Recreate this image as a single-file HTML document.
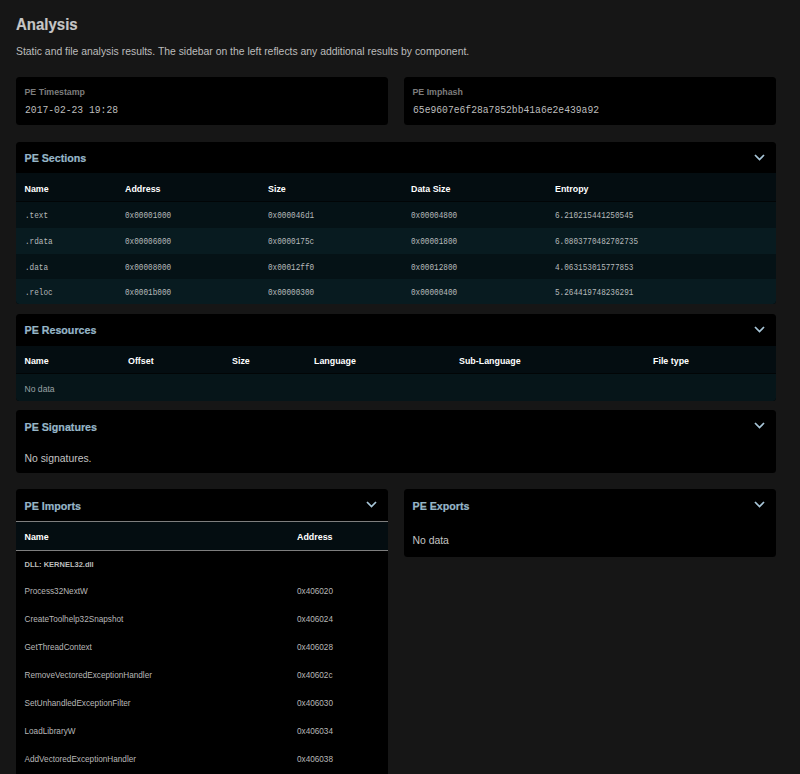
<!DOCTYPE html>
<html><head><meta charset="utf-8">
<style>
*{box-sizing:border-box;margin:0;padding:0}
html,body{width:800px;height:774px;overflow:hidden;background:#161616;font-family:"Liberation Sans",sans-serif;color:#ddd}
.abs{position:absolute}
h1{position:absolute;left:16px;top:13px;font-size:15px;font-weight:bold;color:#c6c6c6;line-height:20px;transform:scaleY(1.1);transform-origin:0 4.5px;margin-top:0.5px;-webkit-text-stroke:0.15px #c6c6c6}
.sub{position:absolute;left:16px;top:45px;font-size:10.4px;color:#bcbcbc;line-height:14px}
.card{position:absolute;background:#000;border-radius:3.5px;overflow:hidden}
.lbl{position:absolute;left:8.5px;font-size:8.8px;font-weight:bold;color:#7c7c7c;line-height:12px}
.val{position:absolute;left:9px;font-family:"Liberation Mono",monospace;font-size:9.7px;color:#bdbdbd;line-height:12px;transform:scaleY(1.15);transform-origin:0 100%}
.title{position:absolute;left:8.5px;font-size:10.7px;transform:scaleY(1.1);transform-origin:0 10.5px;font-weight:bold;color:#96b6c8;line-height:14px;-webkit-text-stroke:0.2px #96b6c8}
.chev{position:absolute;width:11px;height:7px}
.thead{position:absolute;left:0;right:0;background:#040d11}
.th{position:absolute;font-size:8.9px;font-weight:bold;color:#fff;line-height:12px}
.row{position:absolute;left:0;right:0}
.odd{background:#051216}
.even{background:#081b20}
.td{position:absolute;font-family:"Liberation Mono",monospace;font-size:7.7px;color:#b6babb;line-height:10px;margin-top:1px;transform:scaleY(1.15);transform-origin:0 8px}
.ti{position:absolute;font-size:8.2px;color:#b8b8b8;line-height:12px}
</style></head><body>
<h1>Analysis</h1>
<div class="sub">Static and file analysis results. The sidebar on the left reflects any additional results by component.</div>

<div class="card" style="left:16px;top:77px;width:372px;height:48px">
  <div class="lbl" style="top:9px">PE Timestamp</div>
  <div class="val" style="top:29px">2017-02-23 19:28</div>
</div>
<div class="card" style="left:404px;top:77px;width:372px;height:48px">
  <div class="lbl" style="top:9px">PE Imphash</div>
  <div class="val" style="top:29px">65e9607e6f28a7852bb41a6e2e439a92</div>
</div>

<!-- PE Sections -->
<div class="card" style="left:16px;top:142px;width:760px;height:162px">
  <div class="title" style="top:9px">PE Sections</div>
  <svg class="chev" style="left:738px;top:12px" viewBox="0 0 11 7"><path d="M1 1 L5.5 5.5 L10 1" fill="none" stroke="#a8c6d8" stroke-width="1.75"/></svg>
  <div class="thead" style="top:31px;height:29px;border-bottom:1px solid #020506">
    <div class="th" style="left:8.5px;top:9.5px">Name</div>
    <div class="th" style="left:109px;top:9.5px">Address</div>
    <div class="th" style="left:252px;top:9.5px">Size</div>
    <div class="th" style="left:395px;top:9.5px">Data Size</div>
    <div class="th" style="left:539px;top:9.5px">Entropy</div>
  </div>
  <div class="row odd" style="top:60px;height:26px">
    <div class="td" style="left:9px;top:8px">.text</div><div class="td" style="left:109px;top:8px">0x00001000</div><div class="td" style="left:252px;top:8px">0x000046d1</div><div class="td" style="left:395px;top:8px">0x00004800</div><div class="td" style="left:539px;top:8px">6.210215441250545</div>
  </div>
  <div class="row even" style="top:86px;height:25.5px">
    <div class="td" style="left:9px;top:8px">.rdata</div><div class="td" style="left:109px;top:8px">0x00006000</div><div class="td" style="left:252px;top:8px">0x0000175c</div><div class="td" style="left:395px;top:8px">0x00001800</div><div class="td" style="left:539px;top:8px">6.0803770482702735</div>
  </div>
  <div class="row odd" style="top:111.5px;height:25.5px">
    <div class="td" style="left:9px;top:8px">.data</div><div class="td" style="left:109px;top:8px">0x00008000</div><div class="td" style="left:252px;top:8px">0x00012ff0</div><div class="td" style="left:395px;top:8px">0x00012800</div><div class="td" style="left:539px;top:8px">4.063153015777853</div>
  </div>
  <div class="row even" style="top:137px;height:25.5px">
    <div class="td" style="left:9px;top:8px">.reloc</div><div class="td" style="left:109px;top:8px">0x0001b000</div><div class="td" style="left:252px;top:8px">0x00000300</div><div class="td" style="left:395px;top:8px">0x00000400</div><div class="td" style="left:539px;top:8px">5.264419748236291</div>
  </div>
</div>

<!-- PE Resources -->
<div class="card" style="left:16px;top:314px;width:760px;height:87px">
  <div class="title" style="top:9px">PE Resources</div>
  <svg class="chev" style="left:738px;top:12px" viewBox="0 0 11 7"><path d="M1 1 L5.5 5.5 L10 1" fill="none" stroke="#a8c6d8" stroke-width="1.75"/></svg>
  <div class="thead" style="top:31.5px;height:28px;border-bottom:1px solid #020506">
    <div class="th" style="left:8.5px;top:9.5px">Name</div>
    <div class="th" style="left:112px;top:9.5px">Offset</div>
    <div class="th" style="left:216px;top:9.5px">Size</div>
    <div class="th" style="left:298px;top:9.5px">Language</div>
    <div class="th" style="left:443px;top:9.5px">Sub-Language</div>
    <div class="th" style="left:637px;top:9.5px">File type</div>
  </div>
  <div class="row" style="top:59.5px;height:28px;background:#061519">
    <div class="ti" style="left:8.5px;top:9.5px;font-size:8.6px;color:#9aa2a4">No data</div>
  </div>
</div>

<!-- PE Signatures -->
<div class="card" style="left:16px;top:410px;width:760px;height:63px">
  <div class="title" style="top:9.5px">PE Signatures</div>
  <svg class="chev" style="left:738px;top:12px" viewBox="0 0 11 7"><path d="M1 1 L5.5 5.5 L10 1" fill="none" stroke="#a8c6d8" stroke-width="1.75"/></svg>
  <div class="ti" style="left:8.5px;top:43px;font-size:10.4px;color:#c4c4c4">No signatures.</div>
</div>

<!-- PE Imports -->
<div class="card" style="left:16px;top:489px;width:372px;height:300px">
  <div class="title" style="top:9.5px">PE Imports</div>
  <svg class="chev" style="left:350px;top:12px" viewBox="0 0 11 7"><path d="M1 1 L5.5 5.5 L10 1" fill="none" stroke="#a8c6d8" stroke-width="1.75"/></svg>
  <div class="thead" style="top:32px;height:30px;border-top:1px solid #7e7e7e;border-bottom:1px solid #7e7e7e">
    <div class="th" style="left:8.5px;top:8.5px">Name</div>
    <div class="th" style="left:281px;top:8.5px">Address</div>
  </div>
  <div class="ti" style="left:8.5px;top:70px;font-size:7.5px;font-weight:bold;color:#bdbdbd">DLL: KERNEL32.dll</div>
  <div class="ti" style="left:8.5px;top:97px">Process32NextW</div><div class="ti" style="left:281px;top:97px">0x406020</div>
  <div class="ti" style="left:8.5px;top:125px">CreateToolhelp32Snapshot</div><div class="ti" style="left:281px;top:125px">0x406024</div>
  <div class="ti" style="left:8.5px;top:153px">GetThreadContext</div><div class="ti" style="left:281px;top:153px">0x406028</div>
  <div class="ti" style="left:8.5px;top:181px">RemoveVectoredExceptionHandler</div><div class="ti" style="left:281px;top:181px">0x40602c</div>
  <div class="ti" style="left:8.5px;top:209px">SetUnhandledExceptionFilter</div><div class="ti" style="left:281px;top:209px">0x406030</div>
  <div class="ti" style="left:8.5px;top:237px">LoadLibraryW</div><div class="ti" style="left:281px;top:237px">0x406034</div>
  <div class="ti" style="left:8.5px;top:265px">AddVectoredExceptionHandler</div><div class="ti" style="left:281px;top:265px">0x406038</div>
</div>

<!-- PE Exports -->
<div class="card" style="left:404px;top:489px;width:372px;height:68px">
  <div class="title" style="top:9.5px">PE Exports</div>
  <svg class="chev" style="left:350px;top:12px" viewBox="0 0 11 7"><path d="M1 1 L5.5 5.5 L10 1" fill="none" stroke="#a8c6d8" stroke-width="1.75"/></svg>
  <div class="ti" style="left:8.5px;top:46px;font-size:10.4px;color:#c4c4c4">No data</div>
</div>
</body></html>
